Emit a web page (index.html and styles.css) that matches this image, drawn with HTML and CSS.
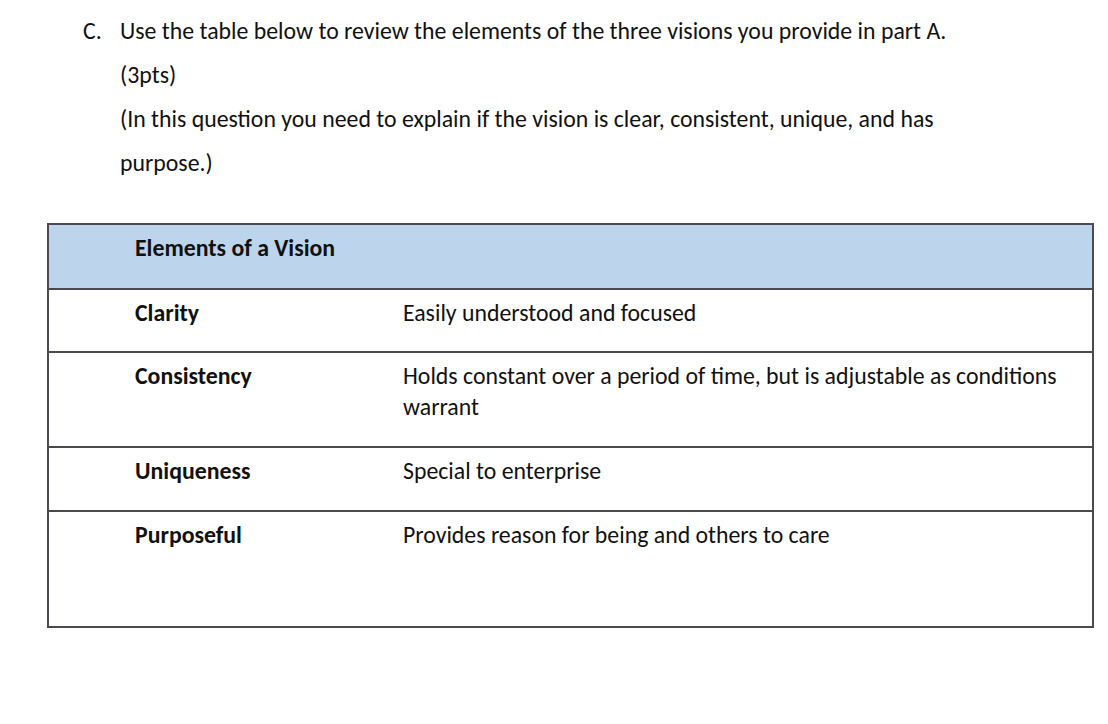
FILE: index.html
```html
<!DOCTYPE html>
<html>
<head>
<meta charset="utf-8">
<link rel="stylesheet" href="styles.css">
</head>
<body>
<div class="page">
  <div class="question">
    <div class="q-line">
      <span class="q-label">C.</span>
      <span class="q-text">Use the table below to review the elements of the three visions you provide in part A.</span>
    </div>
    <div class="q-indent">(3pts)</div>
    <div class="q-indent">(In this question you need to explain if the vision is clear, consistent, unique, and has</div>
    <div class="q-indent">purpose.)</div>
  </div>
  <table class="vtable">
    <tr class="head">
      <th class="c1">Elements of a Vision</th>
      <th class="c2"></th>
    </tr>
    <tr class="r-clarity">
      <td class="c1">Clarity</td>
      <td class="c2">Easily understood and focused</td>
    </tr>
    <tr class="r-consistency">
      <td class="c1">Consistency</td>
      <td class="c2">Holds constant over a period of time, but is adjustable as conditions warrant</td>
    </tr>
    <tr class="r-unique">
      <td class="c1">Uniqueness</td>
      <td class="c2">Special to enterprise</td>
    </tr>
    <tr class="r-purpose">
      <td class="c1">Purposeful</td>
      <td class="c2">Provides reason for being and others to care</td>
    </tr>
  </table>
</div>
</body>
</html>
```
FILE: styles.css
```css
html, body {
  margin: 0;
  padding: 0;
  background: #ffffff;
}
body {
  font-family: Carlito, "Open Sans", "Liberation Sans", sans-serif;
  color: #111111;
  font-size: 23.8px;
}
.page {
  padding-top: 9px;
}
.question {
  padding-left: 83px;
}
.q-line {
  display: flex;
  height: 44px;
  line-height: 44px;
}
.q-label {
  width: 37px;
}
.q-indent {
  padding-left: 37px;
  height: 44px;
  line-height: 44px;
}
.vtable {
  margin-top: 38px;
  margin-left: 47px;
  width: 1047px;
  border-collapse: collapse;
  border: 2px solid #4a4a50;
}
.vtable th, .vtable td {
  border-top: 2px solid #4a4a50;
  border-bottom: 2px solid #4a4a50;
  vertical-align: top;
  text-align: left;
  padding: 7px 0 0 0;
  line-height: 31px;
}
.vtable .c1 {
  width: 268px;
  padding-left: 86px;
  font-weight: bold;
}
.vtable .c2 {
  padding-left: 0;
  padding-right: 24px;
  font-weight: normal;
}
.head th {
  background: #bdd5ec;
  height: 56px;
}
.r-clarity td { height: 54px; }
.r-consistency td { height: 86px; }
.r-unique td { height: 55px; }
.r-purpose td { height: 107px; }
```
